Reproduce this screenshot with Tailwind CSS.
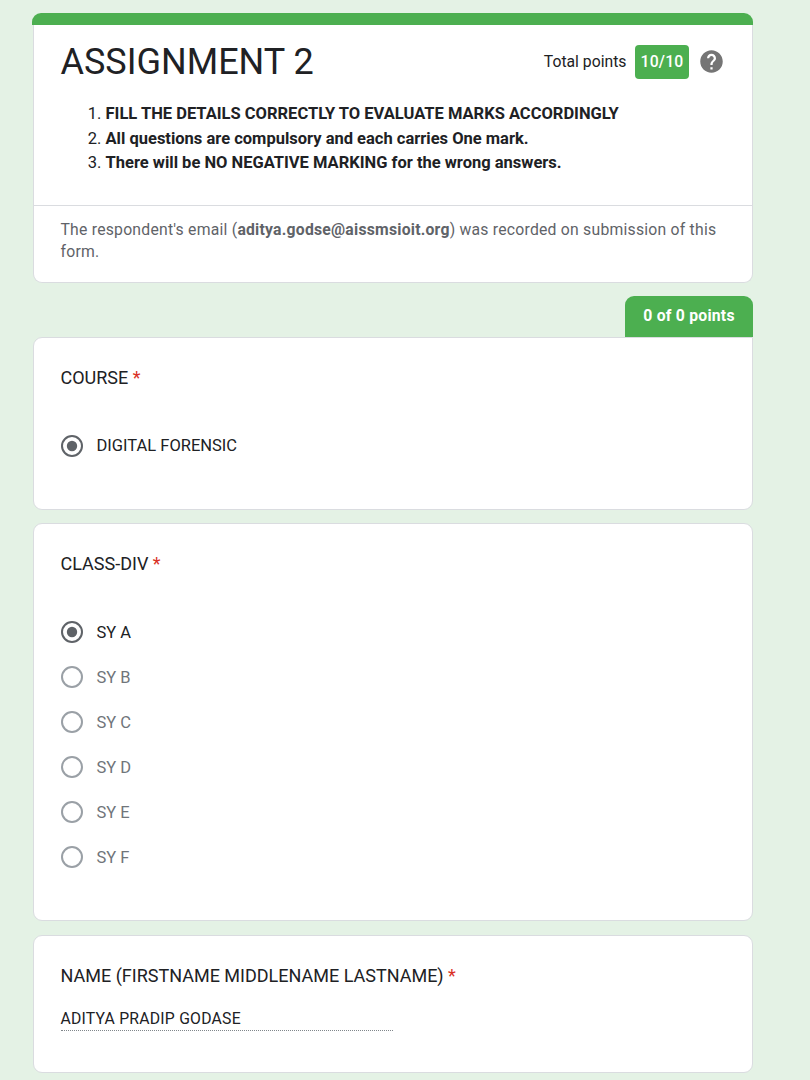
<!DOCTYPE html>
<html lang="en">
<head>
<meta charset="utf-8">
<title>ASSIGNMENT 2</title>
<script src="https://cdn.jsdelivr.net/npm/@tailwindcss/browser@4"></script>
</head>
<body class="bg-[#e4f2e5] h-[1080px] overflow-hidden font-['Roboto',sans-serif] text-[#202124] text-[15.75px] tracking-[0.225px]">
<main class="ml-[33px] w-[720px] pt-[13px] flex flex-col">
  <header class="h-[270px] flex flex-col">
    <div class="h-3 -ml-px rounded-t-[9px] bg-[#4caf50]"></div>
    <div class="grow bg-white border border-t-0 border-[#dadce0] rounded-b-[9px]">
      <div class="h-[181px] border-b border-[#dadce0] px-[26.5px] pt-[14px]">
        <div class="flex items-center h-[46px]">
          <h1 class="text-[36px] leading-[45px] tracking-normal whitespace-nowrap">ASSIGNMENT 2</h1>
          <div class="ml-auto mr-[0.500px] flex items-center whitespace-nowrap">
            <span class="mr-[8.5px] tracking-normal">Total points</span>
            <span class="w-[54px] h-[34px] rounded-[4px] bg-[#4caf50] text-white font-medium flex items-center justify-center">10/10</span>
            <svg class="ml-[9px] -mt-px w-[27px] h-[27px]" viewBox="0 0 24 24" fill="#757575"><path d="M12 2C6.48 2 2 6.48 2 12s4.48 10 10 10 10-4.480 10-10S17.520 2 12 2zm1 17h-2v-2h2v2zm2.070-7.750l-.9.920C13.450 12.900 13 13.500 13 15h-2v-.5c0-1.100.45-2.100 1.170-2.830l1.240-1.260c.37-.36.59-.86.59-1.410 0-1.100-.9-2-2-2s-2 .9-2 2H8c0-2.210 1.790-4 4-4s4 1.790 4 4c0 .88-.36 1.680-.93 2.250z"/></svg>
          </div>
        </div>
        <ol class="list-decimal pl-[45px] mt-[17px] text-[16.5px] leading-[24px] tracking-normal whitespace-nowrap">
          <li class="h-[25px]"><b>FILL THE DETAILS CORRECTLY TO EVALUATE MARKS ACCORDINGLY</b></li>
          <li class="h-[24px]"><b>All questions are compulsory and each carries One mark.</b></li>
          <li class="h-[24px]"><b>There will be NO NEGATIVE MARKING for the wrong answers.</b></li>
        </ol>
      </div>
      <p class="px-[26.5px] pt-[12.500px] leading-[22px] text-[#5f6368]">The respondent's email (<b>aditya.godse@aissmsioit.org</b>) was recorded on submission of this form.</p>
    </div>
  </header>

  <div class="mt-[13px] self-end w-[128px] h-[41px] rounded-t-[9px] bg-[#4caf50] text-white font-bold tracking-[0.225px] leading-[39px] text-center">0 of 0 points</div>
  <section class="h-[173px] bg-white border border-[#dadce0] rounded-[9px] rounded-tr-none px-[27px] pt-[26px]">
    <h2 class="-ml-[0.5px] text-[18px] leading-[27px] tracking-normal">COURSE <span class="text-[#d93025]">*</span></h2>
    <div class="mt-[43px] flex items-center h-[23px]">
      <svg class="w-[22px] h-[22px]" viewBox="0 0 22 22"><circle cx="11" cy="11" r="10" fill="none" stroke="#5f6368" stroke-width="2"/><circle cx="11" cy="11" r="5.200" fill="#5f6368"/></svg>
      <span class="ml-[13.5px] pt-px leading-[24px] text-[16.5px] tracking-normal">DIGITAL FORENSIC</span>
    </div>
  </section>

  <section class="mt-[13px] h-[398px] bg-white border border-[#dadce0] rounded-[9px] px-[27px] pt-[26px]">
    <h2 class="-ml-[0.5px] text-[18px] leading-[27px] tracking-normal">CLASS-DIV <span class="text-[#d93025]">*</span></h2>
    <div class="mt-[44px] flex flex-col gap-[23px] text-[16.5px] tracking-normal leading-[24px] text-[#70757a]">
      <div class="flex items-center h-[22px] text-[#202124]"><svg class="w-[22px] h-[22px]" viewBox="0 0 22 22"><circle cx="11" cy="11" r="10" fill="none" stroke="#5f6368" stroke-width="2"/><circle cx="11" cy="11" r="5.200" fill="#5f6368"/></svg><span class="ml-[13.5px] pt-px">SY A</span></div>
      <div class="flex items-center h-[22px]"><span class="w-[22px] h-[22px] rounded-full border-2 border-[#9aa0a6]"></span><span class="ml-[13.5px] pt-px">SY B</span></div>
      <div class="flex items-center h-[22px]"><span class="w-[22px] h-[22px] rounded-full border-2 border-[#9aa0a6]"></span><span class="ml-[13.5px] pt-px">SY C</span></div>
      <div class="flex items-center h-[22px]"><span class="w-[22px] h-[22px] rounded-full border-2 border-[#9aa0a6]"></span><span class="ml-[13.5px] pt-px">SY D</span></div>
      <div class="flex items-center h-[22px]"><span class="w-[22px] h-[22px] rounded-full border-2 border-[#9aa0a6]"></span><span class="ml-[13.5px] pt-px">SY E</span></div>
      <div class="flex items-center h-[22px]"><span class="w-[22px] h-[22px] rounded-full border-2 border-[#9aa0a6]"></span><span class="ml-[13.5px] pt-px">SY F</span></div>
    </div>
  </section>

  <section class="mt-[14px] h-[138px] bg-white border border-[#dadce0] rounded-[9px] px-[27px] pt-[26px]">
    <h2 class="-ml-[0.5px] text-[18px] leading-[27px] tracking-normal">NAME (FIRSTNAME MIDDLENAME LASTNAME) <span class="text-[#d93025]">*</span></h2>
    <div class="mt-[18px] w-[332px] h-[24px] leading-[23px] border-b border-dotted border-[#80868b]"><span class="-ml-[0.5px]">ADITYA PRADIP GODASE</span></div>
  </section>
</main>
</body>
</html>
